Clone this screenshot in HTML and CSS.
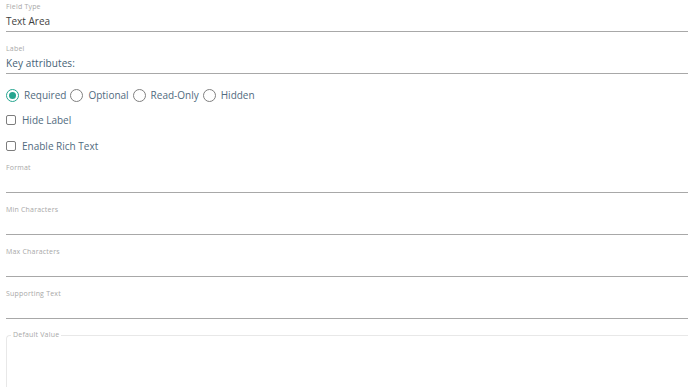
FILE: index.html
```html
<!DOCTYPE html>
<html lang="en">
<head>
<meta charset="utf-8">
<title>Field settings</title>
<link rel="stylesheet" href="styles.css">
</head>
<body>
<div class="form">
  <div class="field">
    <div class="field-label">Field Type</div>
    <div class="field-value">Text Area</div>
  </div>
  <div class="field">
    <div class="field-label">Label</div>
    <div class="field-value accent">Key attributes:</div>
  </div>

  <div class="radio-row">
    <label class="radio checked"><span class="radio-circle"></span><span class="opt-text">Required</span></label>
    <label class="radio"><span class="radio-circle"></span><span class="opt-text">Optional</span></label>
    <label class="radio"><span class="radio-circle"></span><span class="opt-text">Read-Only</span></label>
    <label class="radio"><span class="radio-circle"></span><span class="opt-text">Hidden</span></label>
  </div>

  <label class="check-row first"><span class="check-box"></span><span class="opt-text">Hide Label</span></label>
  <label class="check-row"><span class="check-box"></span><span class="opt-text">Enable Rich Text</span></label>

  <div class="field after-checks">
    <div class="field-label">Format</div>
    <div class="field-value"></div>
  </div>
  <div class="field">
    <div class="field-label">Min Characters</div>
    <div class="field-value"></div>
  </div>
  <div class="field">
    <div class="field-label">Max Characters</div>
    <div class="field-value"></div>
  </div>
  <div class="field">
    <div class="field-label">Supporting Text</div>
    <div class="field-value"></div>
  </div>

  <fieldset class="area">
    <legend class="area-legend">Default Value</legend>
    <div class="area-body"></div>
  </fieldset>
</div>
</body>
</html>
```

FILE: styles.css
```css
* { box-sizing: border-box; }
html, body {
  margin: 0;
  padding: 0;
  background: #ffffff;
  overflow: hidden;
}
body {
  font-family: "Open Sans", "Liberation Sans", sans-serif;
  width: 688px;
  height: 387px;
}
.form {
  padding-left: 6px;
  display: flex;
  flex-direction: column;
}
.field {
  padding-top: 2px;
  padding-bottom: 3px;
  border-bottom: 1px solid #a8a8a8;
  margin-top: 10px;
}
.field:first-child { margin-top: 0; }
.field.after-checks { margin-top: 8px; }
.field-label {
  font-size: 7px;
  line-height: 10px;
  height: 10px;
  color: #a8a8a8;
  letter-spacing: 0.2px;
}
.field-value {
  margin-top: 2px;
  height: 14px;
  font-size: 10px;
  line-height: 14px;
  color: #3f3f3f;
}
.field-value.accent { color: #456176; letter-spacing: 0.1px; }

.radio-row {
  display: flex;
  align-items: center;
  height: 14px;
  margin-top: 14px;
}
.radio {
  display: flex;
  align-items: center;
  margin-right: 4px;
}
.radio-circle {
  width: 13px;
  height: 13px;
  border-radius: 50%;
  border: 1px solid #808080;
  margin-right: 5px;
  display: flex;
  align-items: center;
  justify-content: center;
}
.radio.checked .radio-circle {
  border: 1.5px solid #25a58f;
}
.radio.checked .radio-circle::after {
  content: "";
  width: 7px;
  height: 7px;
  border-radius: 50%;
  background: #25a58f;
}
.opt-text {
  font-size: 10px;
  line-height: 14px;
  color: #516b80;
}
.check-row {
  display: flex;
  align-items: center;
  height: 14px;
  margin-top: 12px;
}
.check-row.first { margin-top: 11px; }
.check-box {
  width: 10px;
  height: 10px;
  border: 1px solid #7d7d7d;
  border-radius: 2px;
  margin-right: 6px;
}
.area {
  margin: 11px 0 0 0;
  padding: 0 0 0 4px;
  border: 1px solid #e8e8e8;
  border-right: none;
  border-radius: 4px 0 0 0;
  min-width: 0;
}
.area-legend {
  font-size: 7px;
  line-height: 10px;
  color: #a8a8a8;
  letter-spacing: 0.2px;
  padding: 0 2px;
}
.area-body {
  height: 60px;
}
```
